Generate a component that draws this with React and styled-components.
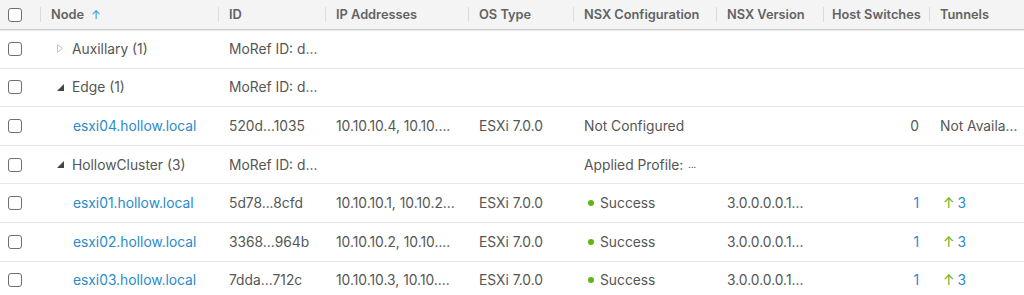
import React from "react";
import styled, { createGlobalStyle } from "styled-components";

const Global = createGlobalStyle`
  html, body { margin: 0; padding: 0; background: #fff; }
  body { font-family: Inter, "Open Sans", sans-serif; }
  * { box-sizing: border-box; }
`;

const COLS = "40px 178px 107px 143px 105px 143px 107px 106px 1fr";

const Grid = styled.div`
  width: 1024px;
  font-family: Inter, "Open Sans", sans-serif;
  font-size: 13.8px;
  color: #565656;
`;

const HeaderRow = styled.div`
  display: grid;
  grid-template-columns: ${COLS};
  height: 30px;
  background: #f4f4f4;
  border-bottom: 1px solid #cfcfcf;
  box-shadow: 0 1px 1px rgba(0, 0, 0, 0.08);
  position: relative;
  z-index: 1;
`;

const HeadCell = styled.div`
  position: relative;
  display: flex;
  align-items: center;
  padding: 0 ${(p) => (p.$tight ? "9px" : "11px")};
  font-size: 12.8px;
  font-weight: 600;
  color: #626262;
  white-space: nowrap;
  &::before {
    content: "";
    position: absolute;
    left: 0;
    top: 7px;
    height: 15px;
    width: 1px;
    background: #dcdcdc;
  }
`;

const CheckCell = styled.div`
  display: flex;
  align-items: center;
  padding-left: 8px;
`;

const Box = styled.span`
  display: inline-block;
  width: 14px;
  height: 14px;
  border: 1px solid #6e6e6e;
  border-radius: 3px;
  background: #fff;
`;

const SortArrow = styled.span`
  color: #3a93d0;
  margin-left: 7px;
  font-weight: 400;
  font-size: 12px;
`;

const Row = styled.div`
  display: grid;
  grid-template-columns: ${COLS};
  height: 38.6px;
  border-bottom: 1px solid #e6e6e6;
`;

const Cell = styled.div`
  display: flex;
  align-items: center;
  justify-content: ${(p) => (p.$right ? "flex-end" : "flex-start")};
  padding: 0 ${(p) => (p.$right ? "10px" : "11px")};
  padding-left: ${(p) => (p.$indent ? `${p.$indent}px` : p.$right ? "0" : "11px")};
  white-space: nowrap;
  overflow: hidden;
`;

const Link = styled.span`
  color: #2a8bcb;
`;

const Caret = styled.span`
  display: inline-flex;
  width: 14px;
  margin-left: 6px;
  margin-right: 1px;
  align-items: center;
`;

const Dot = styled.span`
  display: inline-block;
  width: 6px;
  height: 6px;
  border-radius: 50%;
  background: #60b515;
  margin: 0 6px 0 4px;
`;

const Up = styled.span`
  color: #60b515;
  margin: 0 3px 0 3px;
`;

const Small = styled.span`
  font-size: 9px;
  margin-left: 5px;
`;

const CaretIcon = ({ open }) =>
  open ? (
    <svg width="7" height="7" viewBox="0 0 7 7">
      <polygon points="7,0 7,7 0,7" fill="#444" />
    </svg>
  ) : (
    <svg width="6" height="9" viewBox="0 0 6 9">
      <polygon points="0.5,0.8 5.5,4.5 0.5,8.2" fill="none" stroke="#c2c2c2" strokeWidth="1" />
    </svg>
  );

const Group = ({ name, open, config }) => (
  <Row>
    <CheckCell><Box /></CheckCell>
    <Cell $indent={11}>
      <Caret><CaretIcon open={open} /></Caret>
      {name}
    </Cell>
    <Cell>MoRef ID: d…</Cell>
    <Cell />
    <Cell />
    <Cell>{config}</Cell>
    <Cell />
    <Cell />
    <Cell />
  </Row>
);

const Host = ({ name, id, ip, config, version, hs, tunnels }) => (
  <Row>
    <CheckCell><Box /></CheckCell>
    <Cell $indent={33}><Link>{name}</Link></Cell>
    <Cell>{id}</Cell>
    <Cell>{ip}</Cell>
    <Cell>ESXi 7.0.0</Cell>
    <Cell>{config}</Cell>
    <Cell>{version}</Cell>
    <Cell $right>{hs}</Cell>
    <Cell>{tunnels}</Cell>
  </Row>
);

const success = (
  <>
    <Dot />
    Success
  </>
);

const tun = (
  <>
    <Up>↑</Up>
    <Link>3</Link>
  </>
);

export default function App() {
  return (
    <Grid>
      <Global />
      <HeaderRow>
        <CheckCell><Box /></CheckCell>
        <HeadCell>Node<SortArrow>↑</SortArrow></HeadCell>
        <HeadCell>ID</HeadCell>
        <HeadCell>IP Addresses</HeadCell>
        <HeadCell>OS Type</HeadCell>
        <HeadCell>NSX Configuration</HeadCell>
        <HeadCell>NSX Version</HeadCell>
        <HeadCell $tight>Host Switches</HeadCell>
        <HeadCell>Tunnels</HeadCell>
      </HeaderRow>
      <Group name="Auxillary (1)" open={false} />
      <Group name="Edge (1)" open />
      <Host
        name="esxi04.hollow.local"
        id="520d...1035"
        ip="10.10.10.4, 10.10...."
        config="Not Configured"
        version=""
        hs="0"
        tunnels="Not Availa..."
      />
      <Group name="HollowCluster (3)" open config={<>Applied Profile:<Small>...</Small></>} />
      <Host name="esxi01.hollow.local" id="5d78...8cfd" ip="10.10.10.1, 10.10.2..." config={success} version="3.0.0.0.0.1..." hs={<Link>1</Link>} tunnels={tun} />
      <Host name="esxi02.hollow.local" id="3368...964b" ip="10.10.10.2, 10.10...." config={success} version="3.0.0.0.0.1..." hs={<Link>1</Link>} tunnels={tun} />
      <Host name="esxi03.hollow.local" id="7dda...712c" ip="10.10.10.3, 10.10...." config={success} version="3.0.0.0.0.1..." hs={<Link>1</Link>} tunnels={tun} />
    </Grid>
  );
}
